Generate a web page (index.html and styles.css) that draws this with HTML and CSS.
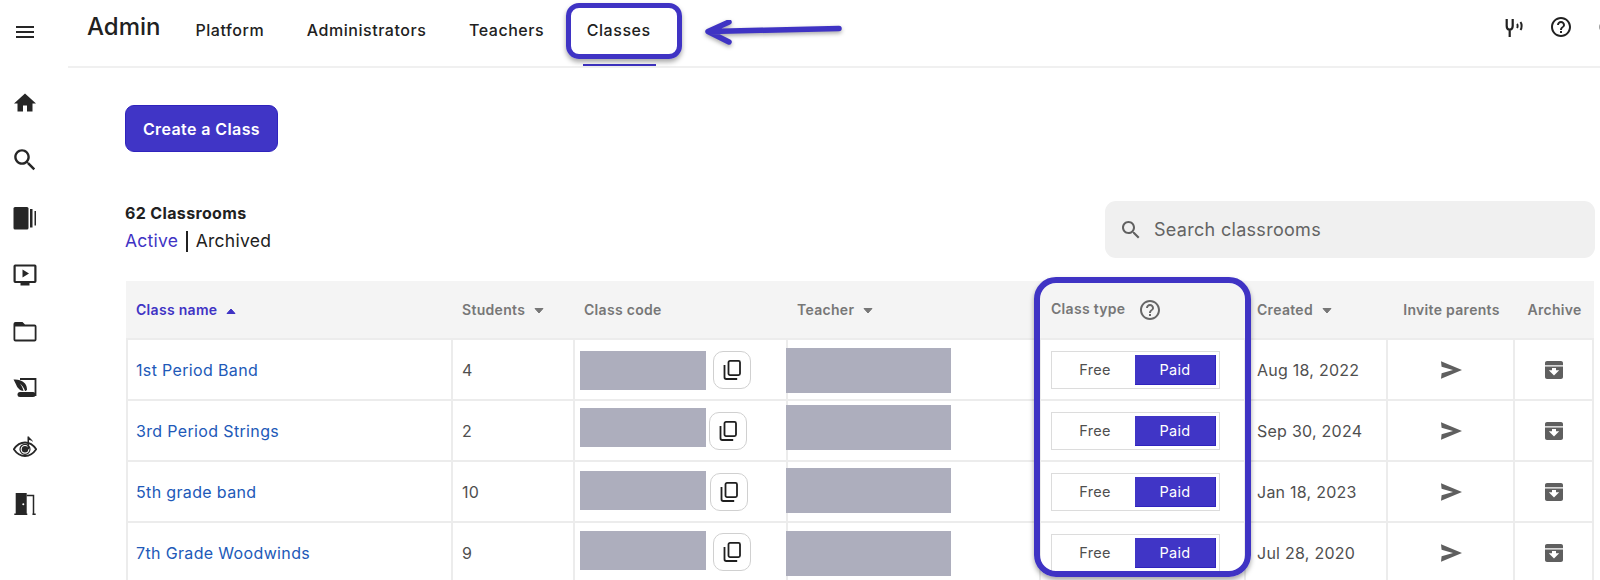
FILE: index.html
```html
<!DOCTYPE html>
<html lang="en">
<head>
<meta charset="utf-8">
<title>Admin - Classes</title>
<link rel="stylesheet" href="styles.css">
</head>
<body>
<svg class="defs" aria-hidden="true">
  <symbol id="i-help" viewBox="0 0 24 24"><path d="M11 18h2v-2h-2v2zm1-16C6.48 2 2 6.48 2 12s4.48 10 10 10 10-4.48 10-10S17.52 2 12 2zm0 18c-4.41 0-8-3.59-8-8s3.59-8 8-8 8 3.59 8 8-3.59 8-8 8zm0-14c-2.21 0-4 1.79-4 4h2c0-1.1.9-2 2-2s2 .9 2 2c0 2-3 1.75-3 5h2c0-2.25 3-2.5 3-5 0-2.21-1.79-4-4-4z"/></symbol>
  <symbol id="i-search" viewBox="0 0 24 24"><path d="M15.5 14h-.79l-.28-.27C15.41 12.59 16 11.11 16 9.5 16 5.91 13.09 3 9.5 3S3 5.91 3 9.5 5.91 16 9.5 16c1.61 0 3.09-.59 4.23-1.57l.27.28v.79l5 4.99L20.49 19l-4.99-5zm-6 0C7.01 14 5 11.99 5 9.5S7.01 5 9.5 5 14 7.01 14 9.5 11.99 14 9.5 14z"/></symbol>
  <symbol id="i-send" viewBox="0 0 24 24"><path d="M2 3.200 23 12 2 20.800l.6-5.600L14 12 2.600 8.800z"/></symbol>
  <symbol id="i-archive" viewBox="0 0 24 24"><path d="M5 3h14c1.100 0 2 .9 2 2v14c0 1.100-.9 2-2 2H5c-1.100 0-2-.9-2-2V5c0-1.100.9-2 2-2zm-2 4.300v1.200h18V7.300zM12 17.500l5.200-5.200H14V10h-4v2.300H6.800z" fill-rule="evenodd"/></symbol>
  <symbol id="i-copy" viewBox="0 0 24 24"><g fill="none" stroke="currentColor" stroke-width="1.800"><rect x="8.500" y="2.900" width="11.500" height="14.200" rx="1.500"/><path d="M4.500 7v12.300c0 1 .7 1.700 1.700 1.700h11"/></g></symbol>
  <symbol id="i-caret" viewBox="0 0 10 6"><path d="M1 5.500 5 1l4 4.500z" stroke="currentColor" stroke-linejoin="round"/></symbol>
</svg>

<aside class="rail">
  <svg class="rail-icon rail-menu" viewBox="0 0 24 24"><path d="M3 18h18v-2H3v2zm0-5h18v-2H3v2zm0-7v2h18V6H3z"/></svg>
  <nav class="rail-list">
    <svg class="rail-icon" viewBox="0 0 24 24"><path d="M10 20.500v-6h4v6h5.500v-8H23L12 2.500 1 12.500h3.500v8z"/></svg>
    <svg class="rail-icon" viewBox="2 2 20 20"><use href="#i-search" width="24" height="24"/></svg>
    <svg class="rail-icon" viewBox="0 0 24 24"><rect x="0.500" y="1" width="15" height="22.500" rx="1.500"/><rect x="17" y="3" width="2.500" height="18.500"/><rect x="21.500" y="5" width="1.500" height="14.500"/></svg>
    <svg class="rail-icon" viewBox="0 0 24 24"><path d="M2.500 1.500h19a1.800 1.800 0 0 1 2 1.800v15a1.800 1.800 0 0 1-2 1.700h-5v2.500h-9V20h-5a1.800 1.800 0 0 1-2-1.700v-15a1.800 1.800 0 0 1 2-1.800zm.2 2v14.500h18.600V3.500zM9.500 6.500l6.500 4-6.500 4z" fill-rule="evenodd"/></svg>
    <svg class="rail-icon" viewBox="0 0 24 24"><path d="M2.500 2h7l2.500 2.500h9.500a2 2 0 0 1 2 2v13a2 2 0 0 1-2 2h-19a2 2 0 0 1-2-2V4a2 2 0 0 1 2-2zm-.2 4.500v13h19.400v-13z" fill-rule="evenodd"/></svg>
    <svg class="rail-icon" viewBox="0 0 24 24">
      <path d="M7 2h15.500v17" fill="none" stroke="currentColor" stroke-width="1.800"/>
      <rect x="4.500" y="15" width="18" height="5" rx="2.500"/>
      <path d="M.5 2.500c4-.5 9 1 11.500 4 1.500 1.800 2 4 2 6.500-.5.5-1.500 1-2 1-1-3-3-6-5-7.500 1.500 2 3 5 3.500 7.500-3 0-6-3-7-5.500C3 7 1.500 4.500.5 2.500z"/>
    </svg>
    <svg class="rail-icon" viewBox="0 0 24 24">
      <path d="M.8 14.300C4 9.500 7.500 7.500 12 7.500s8 2 11.200 6.800C20 19 16.500 21 12 21S4 19 .8 14.300z" fill="none" stroke="currentColor" stroke-width="1.800"/>
      <circle cx="12" cy="14.300" r="5" fill="none" stroke="currentColor" stroke-width="1.200"/>
      <circle cx="12" cy="14.300" r="3.200"/>
      <path d="M14.500 1.500h1.500v12.800h-1.500zM16 1.500c.6 2 3.500 2.500 4 5.500-1-1.200-2.500-1.800-4-2z"/>
    </svg>
    <svg class="rail-icon" viewBox="0 0 24 24">
      <path d="M2.700 1h11v21h-11zm7.600 10.300a1 1 0 1 0 0 2 1 1 0 0 0 0-2z" fill-rule="evenodd"/>
      <path d="M13.700 3.500h6.800V22.500" fill="none" stroke="currentColor" stroke-width="1.500"/>
      <path d="M1.300 21.600h13v1.500h-13zM19.500 21.600h3.200v1.500h-3.200z"/>
    </svg>
  </nav>
</aside>

<main class="main">
  <header class="topbar">
    <h1 class="title">Admin</h1>
    <nav class="tabs">
      <a class="tab">Platform</a>
      <a class="tab">Administrators</a>
      <a class="tab">Teachers</a>
      <a class="tab tab-active">Classes</a>
    </nav>
    <div class="top-actions">
      <svg class="top-icon" viewBox="0 0 24 24"><path d="M3.700 4v7c0 2.300 1.300 3.600 3 3.600s3-1.300 3-3.600V4M6.700 14.500V22" fill="none" stroke="currentColor" stroke-width="2.200"/><path d="M14 9c.8.9.8 3 0 4M17.500 7c1.500 2 1.500 6 0 8" fill="none" stroke="currentColor" stroke-width="2"/></svg>
      <svg class="top-icon"><use href="#i-help"/></svg>
      <span class="avatar"></span>
    </div>
  </header>

  <section class="content">
    <button class="create" type="button">Create a Class</button>

    <div class="summary">
      <div>
        <div class="count">62 Classrooms</div>
        <div class="filter"><a class="filter-on">Active</a><span class="filter-sep"></span><a>Archived</a></div>
      </div>
      <div class="search">
        <svg class="search-icon"><use href="#i-search"/></svg>
        <span>Search classrooms</span>
      </div>
    </div>

    <table class="grid">
      <colgroup>
        <col class="c-name"><col class="c-students"><col class="c-code"><col class="c-teacher"><col class="c-type"><col class="c-created"><col class="c-invite"><col class="c-archive">
      </colgroup>
      <thead>
        <tr>
          <th class="sorted">Class name<svg class="caret"><use href="#i-caret"/></svg></th>
          <th>Students<svg class="caret down"><use href="#i-caret"/></svg></th>
          <th>Class code</th>
          <th>Teacher<svg class="caret down"><use href="#i-caret"/></svg></th>
          <th class="th-wide">Class type<svg class="th-help"><use href="#i-help"/></svg></th>
          <th class="th-date">Created<svg class="caret down"><use href="#i-caret"/></svg></th>
          <th class="center">Invite parents</th>
          <th class="center">Archive</th>
        </tr>
      </thead>
      <tbody>
        <tr class="r1">
          <td class="td-name"><a class="link">1st Period Band</a></td>
          <td class="td-num">4</td>
          <td class="top"><div class="code"><span class="redact redact-code"></span><button class="copy" type="button"><svg><use href="#i-copy"/></svg></button></div></td>
          <td class="top"><span class="redact redact-teacher"></span></td>
          <td><div class="toggle"><span class="opt">Free</span><span class="opt opt-on">Paid</span></div></td>
          <td class="td-date">Aug 18, 2022</td>
          <td class="center"><svg class="act"><use href="#i-send"/></svg></td>
          <td class="center"><svg class="act"><use href="#i-archive"/></svg></td>
        </tr>
        <tr class="r2">
          <td class="td-name"><a class="link">3rd Period Strings</a></td>
          <td class="td-num">2</td>
          <td class="top"><div class="code"><span class="redact redact-code"></span><button class="copy" type="button"><svg><use href="#i-copy"/></svg></button></div></td>
          <td class="top"><span class="redact redact-teacher"></span></td>
          <td><div class="toggle"><span class="opt">Free</span><span class="opt opt-on">Paid</span></div></td>
          <td class="td-date">Sep 30, 2024</td>
          <td class="center"><svg class="act"><use href="#i-send"/></svg></td>
          <td class="center"><svg class="act"><use href="#i-archive"/></svg></td>
        </tr>
        <tr class="r3">
          <td class="td-name"><a class="link">5th grade band</a></td>
          <td class="td-num">10</td>
          <td class="top"><div class="code"><span class="redact redact-code"></span><button class="copy" type="button"><svg><use href="#i-copy"/></svg></button></div></td>
          <td class="top"><span class="redact redact-teacher"></span></td>
          <td><div class="toggle"><span class="opt">Free</span><span class="opt opt-on">Paid</span></div></td>
          <td class="td-date">Jan 18, 2023</td>
          <td class="center"><svg class="act"><use href="#i-send"/></svg></td>
          <td class="center"><svg class="act"><use href="#i-archive"/></svg></td>
        </tr>
        <tr class="r4">
          <td class="td-name"><a class="link">7th Grade Woodwinds</a></td>
          <td class="td-num">9</td>
          <td class="top"><div class="code"><span class="redact redact-code"></span><button class="copy" type="button"><svg><use href="#i-copy"/></svg></button></div></td>
          <td class="top"><span class="redact redact-teacher"></span></td>
          <td><div class="toggle"><span class="opt">Free</span><span class="opt opt-on">Paid</span></div></td>
          <td class="td-date">Jul 28, 2020</td>
          <td class="center"><svg class="act"><use href="#i-send"/></svg></td>
          <td class="center"><svg class="act"><use href="#i-archive"/></svg></td>
        </tr>
      </tbody>
    </table>
  </section>
</main>

<div class="mark mark-tab"></div>
<div class="mark mark-col"></div>
<svg class="mark-arrow" viewBox="0 0 150 40">
  <path d="M138 8.500 9 11.500M28 2 7 11.500 28 22" fill="none" stroke="#3f33c4" stroke-width="5.500" stroke-linecap="round" stroke-linejoin="round"/>
</svg>
</body>
</html>
```

FILE: styles.css
```css
* { box-sizing: border-box; }

html, body {
  margin: 0;
  height: 580px;
  overflow: hidden;
}

body {
  position: relative;
  display: flex;
  background: #fff;
  color: #1f1f1f;
  font-family: Inter, "Liberation Sans", sans-serif;
}

.defs { position: absolute; width: 0; height: 0; }

/* Left rail */
.rail {
  flex: 0 0 68px;
  display: flex;
  flex-direction: column;
  align-items: center;
  padding: 20px 18px 0 0;
}

.rail-icon {
  display: block;
  width: 24px;
  height: 24px;
  fill: #262626;
  color: #262626;
}

.rail-list {
  display: flex;
  flex-direction: column;
  align-items: center;
  gap: 33.300px;
  margin-top: 47px;
}

/* Top bar */
.main {
  flex: 1;
  min-width: 0;
  display: flex;
  flex-direction: column;
}

.topbar {
  flex: 0 0 68px;
  display: flex;
  align-items: flex-start;
  padding-left: 19px;
  border-bottom: 2px solid #f0f0f0;
}

.title {
  margin: 11px 35px 0 0;
  font-size: 24px;
  line-height: 32px;
  font-weight: 500;
  color: #212121;
}

.tabs { display: flex; gap: 42.500px; }

.tab {
  position: relative;
  display: block;
  padding-top: 18px;
  height: 66px;
  font-size: 16px;
  line-height: 24px;
  font-weight: 500;
  letter-spacing: .55px;
  color: #212121;
}

.tab-active::after {
  content: "";
  position: absolute;
  left: -4px;
  right: -5px;
  bottom: 0;
  height: 2px;
  background: #3f33c4;
}

.top-actions {
  margin-left: auto;
  margin-right: -3px;
  display: flex;
  align-items: center;
  gap: 22px;
  padding-top: 15px;
}

.top-icon {
  display: block;
  width: 24px;
  height: 24px;
  fill: #212121;
  color: #212121;
}

.avatar {
  width: 4px;
  height: 8px;
  margin-left: 4px;
  border-radius: 4px 0 0 4px;
  background: #9e9e9e;
}

/* Content */
.content { padding: 37px 0 0 57px; }

.create {
  display: block;
  width: 153px;
  height: 47px;
  padding: 0;
  border: 1px solid #2f23bd;
  border-radius: 9px;
  background: #4035c6;
  color: #fff;
  font: 600 16px/24px Inter, "Liberation Sans", sans-serif;
  letter-spacing: .4px;
}

.summary {
  display: flex;
  justify-content: space-between;
  align-items: flex-end;
  margin-top: 49px;
  margin-right: 5px;
}

.count {
  font-size: 16px;
  line-height: 20px;
  font-weight: 700;
  color: #212121;
  letter-spacing: .35px;
}

.filter {
  display: flex;
  align-items: center;
  margin-top: 6px;
  font-size: 17.500px;
  line-height: 24px;
  letter-spacing: .25px;
  color: #212121;
}

.filter-on { color: #3f33c4; }

.filter-sep {
  width: 1.500px;
  height: 21px;
  margin: 0 8px;
  background: #212121;
}

.search {
  width: 490px;
  height: 57px;
  margin-bottom: -5px;
  display: flex;
  align-items: center;
  gap: 11px;
  padding-left: 14px;
  border-radius: 11px;
  background: #f0f0f0;
  font-size: 18px;
  letter-spacing: .3px;
  color: #636363;
}

.search-icon {
  display: block;
  width: 24px;
  height: 24px;
  fill: #616161;
}

/* Table */
.grid {
  width: 1468px;
  margin: 28px 0 0 1px;
  table-layout: fixed;
  border-collapse: separate;
  border-spacing: 0;
  font-size: 16px;
}

.c-name { width: 327px; }
.c-students { width: 122px; }
.c-code { width: 213px; }
.c-teacher { width: 253px; }
.c-type { width: 205px; }
.c-created { width: 142px; }
.c-invite { width: 127px; }
.c-archive { width: 79px; }

.grid th {
  height: 59px;
  padding: 0 0 0 9px;
  background: #f4f4f4;
  border-bottom: 2px solid #ececec;
  font-size: 14px;
  font-weight: 600;
  letter-spacing: .3px;
  text-align: left;
  color: #777;
  white-space: nowrap;
}

.grid th.sorted { padding-left: 10px; color: #3f33c4; }
.grid th.th-wide { padding-left: 10px; }
.grid th.th-date { padding-left: 11px; }

.grid th.center, .grid td.center { padding: 0; text-align: center; }

.caret {
  display: inline-block;
  width: 10px;
  height: 6px;
  margin: 0 0 1px 9px;
  fill: currentColor;
}

.caret.down { transform: rotate(180deg); }

.th-help {
  display: inline-block;
  width: 24px;
  height: 24px;
  margin-left: 13px;
  vertical-align: middle;
  fill: #666;
}

.grid td {
  height: 61px;
  padding: 0 0 0 10px;
  border-bottom: 2px solid #ececec;
  border-right: 2px solid #ececec;
  color: #4f4f4f;
  white-space: nowrap;
  letter-spacing: .25px;
}

.grid td.td-name { padding-left: 8px; border-left: 2px solid #ececec; }
.grid td.td-num { padding-left: 9px; }
.grid td.td-date { padding-left: 11px; }

.grid td.top { padding: 0; vertical-align: top; }

.link { color: #2159b8; letter-spacing: .35px; }

.r1 { --code-top: 11px; --btn-top: 0px; --btn-gap: 7px; --teacher-top: 8px; }
.r2 { --code-top: 7px; --btn-top: 4px; --btn-gap: 3px; --teacher-top: 4px; }
.r3 { --code-top: 9px; --btn-top: 2px; --btn-gap: 4px; --teacher-top: 6px; }
.r4 { --code-top: 8px; --btn-top: 2px; --btn-gap: 7px; --teacher-top: 8px; }

.code {
  display: flex;
  align-items: flex-start;
  gap: var(--btn-gap);
  padding: var(--code-top) 0 0 5px;
}

.redact { display: block; background: #adaebd; }
.redact-code { width: 126px; height: 39px; }
.redact-teacher {
  width: 165px;
  height: 45px;
  margin: var(--teacher-top) 0 0 -2px;
}

.copy {
  flex: none;
  width: 38px;
  height: 38px;
  margin-top: var(--btn-top);
  padding: 0;
  display: flex;
  align-items: center;
  justify-content: center;
  border: 1px solid #d0d0d0;
  border-radius: 10px;
  background: #fff;
  color: #1f1f1f;
}

.copy svg { width: 24px; height: 24px; }

.toggle {
  display: flex;
  width: 169px;
  height: 38px;
  padding: 3px;
  border: 1.500px solid #dcdcdc;
  font-size: 14.500px;
}

.opt {
  flex: 1;
  display: flex;
  align-items: center;
  justify-content: center;
  color: #4f4f4f;
}

.opt-on {
  flex: 0 0 81px;
  background: #4035c6;
  border-bottom: 1px solid #2f23bd;
  border-right: 1px solid #2f23bd;
  color: #fff;
}

.act {
  display: inline-block;
  width: 24px;
  height: 24px;
  vertical-align: middle;
  fill: #5f5f5f;
}

/* Annotations drawn over the screenshot */
.mark {
  position: absolute;
  border: 5px solid #3f33c4;
  box-shadow: 0 3px 5px rgba(0, 0, 0, .35);
  pointer-events: none;
}

.mark-tab {
  left: 566px;
  top: 3px;
  width: 116px;
  height: 56px;
  border-radius: 13px;
}

.mark-col {
  left: 1034px;
  top: 277px;
  width: 217px;
  height: 300px;
  border-width: 6px;
  border-radius: 22px;
}

.mark-arrow {
  position: absolute;
  left: 701px;
  top: 20px;
  width: 150px;
  height: 40px;
  filter: drop-shadow(0 2px 2px rgba(0, 0, 0, .35));
}
```
